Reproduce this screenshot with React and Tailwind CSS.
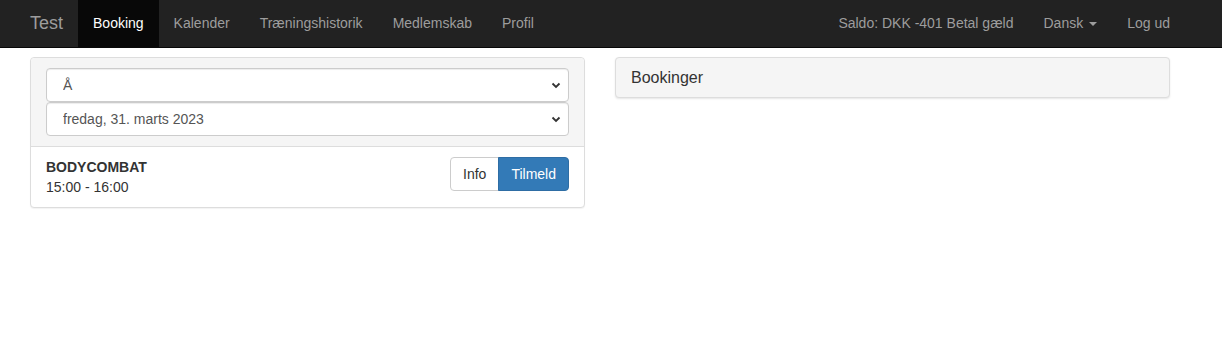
import { useState } from "react";

const navLinks = ["Booking", "Kalender", "Træningshistorik", "Medlemskab", "Profil"];

function Chevron() {
  return (
    <svg
      className="pointer-events-none absolute right-[8px] top-1/2 -translate-y-1/2"
      width="10"
      height="10"
      viewBox="0 0 10 10"
    >
      <path d="M1.5 3.5 L5 7 L8.5 3.5" fill="none" stroke="#333" strokeWidth="1.8" />
    </svg>
  );
}

function SelectBox({ value, options, onChange }) {
  return (
    <div className="relative">
      <select
        value={value}
        onChange={(e) => onChange(e.target.value)}
        className="block h-[34px] w-full appearance-none rounded-[4px] border border-[#ccc] bg-white pl-[16px] pr-[15px] text-[14px] text-[#555] shadow-[inset_0_1px_1px_rgba(0,0,0,0.075)] outline-none"
      >
        {options.map((o) => (
          <option key={o}>{o}</option>
        ))}
      </select>
      <Chevron />
    </div>
  );
}

export default function App() {
  const [center, setCenter] = useState("Å");
  const [day, setDay] = useState("fredag, 31. marts 2023");

  return (
    <div className="min-h-[357px] bg-white font-['Liberation_Sans',Arial,sans-serif] text-[14px] text-[#333]">
      <nav className="flex h-[48px] items-stretch border-b border-[#080808] bg-[#222] pl-[15px] pr-[37px]">
        <a className="flex items-center px-[15px] text-[18px] text-[#9d9d9d]">Test</a>
        <ul className="flex items-stretch">
          {navLinks.map((link, i) => (
            <li
              key={link}
              className={
                i === 0
                  ? "flex items-center bg-[#080808] px-[15px] text-white"
                  : "flex items-center px-[15px] text-[#9d9d9d]"
              }
            >
              {link}
            </li>
          ))}
        </ul>
        <ul className="ml-auto flex items-stretch">
          <li className="flex items-center px-[15px] text-[#9d9d9d]">Saldo: DKK -401 Betal gæld</li>
          <li className="flex items-center px-[15px] text-[#9d9d9d]">
            Dansk
            <span className="ml-[6px] inline-block h-0 w-0 border-x-[4px] border-t-[4px] border-x-transparent border-t-[#9d9d9d]" />
          </li>
          <li className="flex items-center px-[15px] text-[#9d9d9d]">Log ud</li>
        </ul>
      </nav>

      <div className="flex gap-[30px] pl-[30px] pt-[9px]">
        <div className="w-[555px] rounded-[4px] border border-[#ddd] bg-white shadow-[0_1px_1px_rgba(0,0,0,0.05)]">
          <div className="flex flex-col rounded-t-[4px] border-b border-[#ddd] bg-[#f5f5f5] px-[15px] pb-[10px] pt-[10px]">
            <SelectBox value={center} options={["Å"]} onChange={setCenter} />
            <SelectBox
              value={day}
              options={["fredag, 31. marts 2023"]}
              onChange={setDay}
            />
          </div>
          <div className="flex items-start justify-between px-[15px] py-[10px]">
            <div className="leading-[20px]">
              <div className="font-bold">BODYCOMBAT</div>
              <div>15:00 - 16:00</div>
            </div>
            <div className="flex">
              <button className="h-[34px] rounded-l-[4px] border border-[#ccc] bg-white px-[12px] text-[#333]">
                Info
              </button>
              <button className="-ml-px h-[34px] rounded-r-[4px] border border-[#2e6da4] bg-[#337ab7] px-[12px] text-white">
                Tilmeld
              </button>
            </div>
          </div>
        </div>

        <div className="h-[41px] w-[555px] self-start rounded-[4px] border border-[#ddd] bg-[#f5f5f5] shadow-[0_1px_2px_rgba(0,0,0,0.1)]">
          <div className="px-[15px] py-[10px] text-[16px] leading-[19px] text-[#333]">Bookinger</div>
        </div>
      </div>
    </div>
  );
}
